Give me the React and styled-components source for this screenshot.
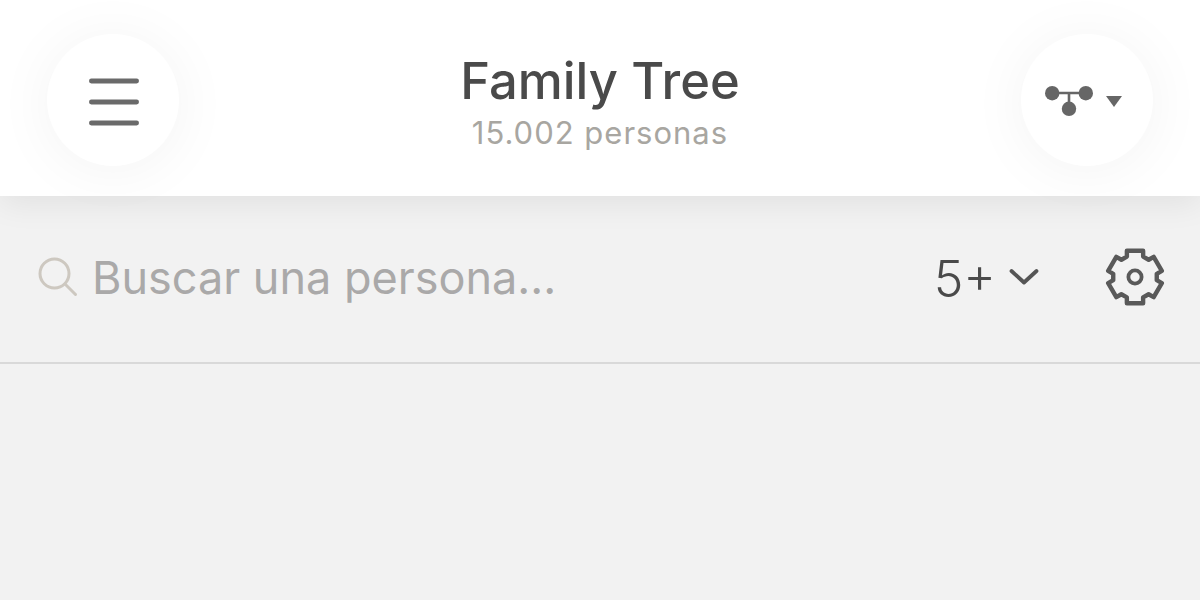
import React from 'react';
import styled, { createGlobalStyle } from 'styled-components';

const GlobalStyle = createGlobalStyle`
  html, body {
    margin: 0;
    padding: 0;
    height: 100%;
    background: #f2f2f2;
    overflow: hidden;
  }
  #root {
    height: 100%;
  }
`;

// six teeth, one pointing straight up
function gearPath() {
  const outer = 27.5;
  const inner = 22;
  const points = [];
  for (let i = 0; i < 6; i++) {
    const a = (i * Math.PI) / 3 - Math.PI / 2;
    [[-0.3, outer], [0.3, outer], [0.38, inner], [0.67, inner]].forEach(([d, r]) => {
      points.push(`${(32 + r * Math.cos(a + d)).toFixed(2)} ${(32 + r * Math.sin(a + d)).toFixed(2)}`);
    });
  }
  return `M${points.join('L')}Z`;
}

const MenuIcon = () => (
  <svg width="50" height="48" viewBox="0 0 50 48">
    <g stroke="#6a6a6a" strokeWidth="4.8" strokeLinecap="round">
      <line x1="2.4" y1="3" x2="47.6" y2="3" />
      <line x1="2.4" y1="24" x2="47.6" y2="24" />
      <line x1="2.4" y1="45" x2="47.6" y2="45" />
    </g>
  </svg>
);

const TreeIcon = () => (
  <svg width="48" height="30" viewBox="0 0 48 30">
    <path d="M7 7H41M24 7V23" stroke="#666" strokeWidth="2.6" fill="none" />
    <circle cx="7.2" cy="7.2" r="7.2" fill="#666" />
    <circle cx="40.8" cy="7.2" r="7.2" fill="#666" />
    <circle cx="24" cy="22.8" r="7.2" fill="#666" />
  </svg>
);

const CaretIcon = () => (
  <svg width="16" height="11" viewBox="0 0 16 11">
    <path d="M0 0H16L8 11Z" fill="#666" />
  </svg>
);

const SearchIcon = () => (
  <svg width="40" height="40" viewBox="0 0 40 40" fill="none" stroke="#cdc8c0" strokeWidth="3" strokeLinecap="round">
    <circle cx="16.5" cy="16.5" r="14.5" />
    <line x1="27" y1="27" x2="37.5" y2="37.5" />
  </svg>
);

const ChevronIcon = () => (
  <svg width="30" height="18" viewBox="0 0 30 18" fill="none" stroke="#555" strokeWidth="3.8" strokeLinecap="round" strokeLinejoin="round">
    <path d="M2.5 3L15 14.5L27.5 3" />
  </svg>
);

const GearIcon = () => (
  <svg width="64" height="64" viewBox="0 0 64 64" fill="none" stroke="#595959" strokeWidth="4.4" strokeLinejoin="round">
    <path d={gearPath()} />
    <circle cx="32" cy="32" r="6.6" strokeWidth="3.8" />
  </svg>
);

export default function App() {
  return (
    <Page>
      <GlobalStyle />
      <Header>
        <RoundButton aria-label="menu" $pad="4px 0 0 2px">
          <MenuIcon />
        </RoundButton>
        <TitleBlock>
          <Title>Family Tree</Title>
          <Subtitle>15.002 personas</Subtitle>
        </TitleBlock>
        <RoundButton aria-label="view" $gap="13px" $pad="2px 7px 0 0">
          <TreeIcon />
          <CaretIcon />
        </RoundButton>
      </Header>
      <SearchBar>
        <SearchField>
          <SearchIcon />
          <Placeholder>Buscar una persona...</Placeholder>
        </SearchField>
        <AgeFilter>
          <AgeValue>5+</AgeValue>
          <ChevronIcon />
        </AgeFilter>
        <SettingsButton aria-label="settings">
          <GearIcon />
        </SettingsButton>
      </SearchBar>
    </Page>
  );
}

const Page = styled.div`
  height: 100%;
  background: #f2f2f2;
  font-family: Inter, "Liberation Sans", sans-serif;
`;

const Header = styled.header`
  position: relative;
  z-index: 1;
  height: 196px;
  box-sizing: border-box;
  padding: 4px 47px 0 47px;
  display: flex;
  align-items: center;
  justify-content: space-between;
  background: #fff;
  box-shadow: 0 8px 30px rgba(0, 0, 0, 0.07);
`;

const RoundButton = styled.button`
  width: 132px;
  height: 132px;
  padding: ${(p) => p.$pad || '0'};
  border: 0;
  border-radius: 50%;
  background: #fff;
  box-shadow: 0 4px 60px rgba(0, 0, 0, 0.05);
  display: flex;
  align-items: center;
  justify-content: center;
  gap: ${(p) => p.$gap || '0'};
`;

const TitleBlock = styled.div`
  padding-top: 4px;
  text-align: center;
`;

const Title = styled.h1`
  margin: 0;
  font-size: 50.7px;
  line-height: 60px;
  font-weight: 500;
  color: #4a4a4a;
`;

const Subtitle = styled.div`
  margin-top: 2px;
  font-size: 31px;
  line-height: 40px;
  letter-spacing: 1px;
  color: #a8a6a1;
`;

const SearchBar = styled.div`
  height: 168px;
  box-sizing: border-box;
  padding: 0 33px 4px 38px;
  display: flex;
  align-items: center;
  border-bottom: 2px solid #d9d9d9;
`;

const SearchField = styled.div`
  flex: 1;
  display: flex;
  align-items: center;
  gap: 14px;
`;

const Placeholder = styled.span`
  font-size: 45px;
  color: #aaa9a9;
`;

const AgeFilter = styled.div`
  display: flex;
  align-items: center;
  gap: 13px;
  margin-right: 64px;
`;

const AgeValue = styled.span`
  position: relative;
  top: 2px;
  font-size: 50px;
  font-weight: 350;
  color: #4a4a4a;
`;

const SettingsButton = styled.button`
  padding: 0;
  border: 0;
  background: none;
  display: flex;
`;
